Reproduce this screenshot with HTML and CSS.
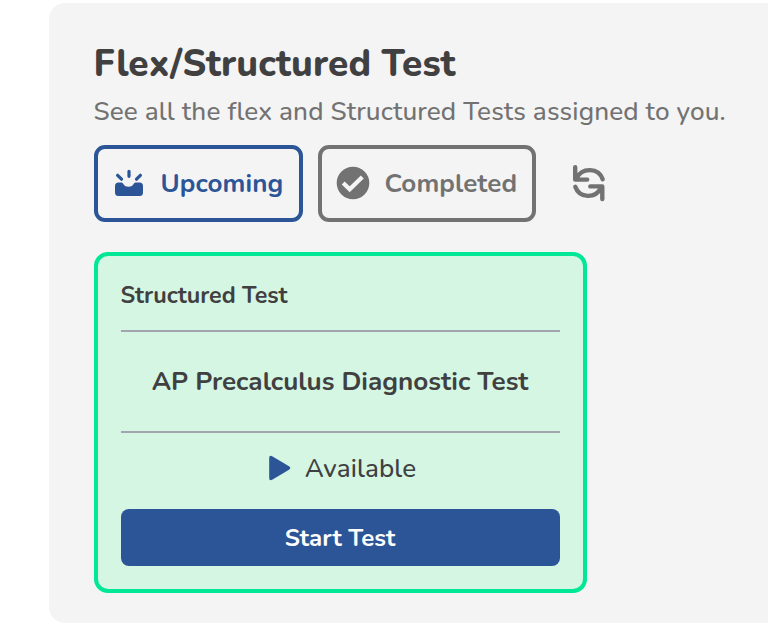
FILE: index.html
```html
<!DOCTYPE html>
<html lang="en">
<head>
<meta charset="utf-8">
<title>Flex/Structured Test</title>
<link rel="stylesheet" href="styles.css">
</head>
<body>
<main class="panel">
  <h1 class="title"><span>Flex/Structured Test</span></h1>
  <p class="subtitle"><span>See all the flex and Structured Tests assigned to you.</span></p>
  <div class="tabs">
    <button class="tab tab-active">
      <svg class="icon-inbox" width="30" height="28" viewBox="0 0 30 28" fill="currentColor">
        <path d="M3.500 13.500H7.500C9.500 13.500 9.500 17.800 14.500 17.800S19.500 13.500 21.500 13.500H25.500Q29 13.500 29 17V23.500Q29 27 25.500 27H4.500Q1 27 1 23.500V17Q1 13.500 4.500 13.500Z"/>
        <path d="M15 2.300V7.300M3.600 6.300L7.500 10.200M26.400 6.300L22.500 10.200" fill="none" stroke="currentColor" stroke-width="3.200" stroke-linecap="round"/>
      </svg>
      <span class="upcoming">Upcoming</span>
    </button>
    <button class="tab">
      <svg class="icon-check" width="34" height="34" viewBox="0 0 34 34">
        <circle cx="17" cy="17" r="16.300" fill="currentColor"/>
        <path d="M7.200 17L13.700 23.300L26.300 11" fill="none" stroke="#f4f4f4" stroke-width="4.200"/>
      </svg>
      <span class="completed">Completed</span>
    </button>
    <button class="refresh" aria-label="Refresh">
      <svg width="34" height="38" viewBox="0 0 34 38" fill="none" stroke="currentColor" stroke-width="4.400" stroke-linecap="round" stroke-linejoin="round">
        <path d="M3.200 3.200V15.600H15.200M4.300 14.500C10 3 26.500 3.500 30.700 15.300"/>
        <path d="M30.300 35V22.400H18.300M29.200 23.500C23.500 35 7.500 34.500 3.300 22.700"/>
      </svg>
    </button>
  </div>
  <section class="card">
    <h2 class="kind"><span>Structured Test</span></h2>
    <h3 class="name"><span>AP Precalculus Diagnostic Test</span></h3>
    <div class="status">
      <svg width="24" height="26" viewBox="0 0 24 26" fill="currentColor"><path d="M1.200 3Q1.200-.2 4.200 1.200L21 11.300Q23.500 13 21 14.700L4.200 24.800Q1.200 26.200 1.200 23Z"/></svg>
      <span class="available">Available</span>
    </div>
    <button class="start"><span>Start Test</span></button>
  </section>
</main>
</body>
</html>
```
FILE: styles.css
```css
* { box-sizing: border-box; }
body { margin: 0; height: 623px; overflow: hidden; background: #fff; font-family: Nunito, Lato, "Open Sans", sans-serif; color: #404041; }
button { font: inherit; margin: 0; padding: 0; border: 0; background: none; }
h1, h2, h3, p { margin: 0; white-space: nowrap; }
svg { display: block; flex: none; }
.panel { margin: 3px 0 0 49px; height: 620px; padding: 37px 0 0 44.500px; background: #f4f4f4; border-radius: 16px 0 0 16px; }
.title { font-size: 37px; line-height: 48px; font-weight: 800; letter-spacing: 0.080px; }
.subtitle { font-size: 26.100px; line-height: 36px; margin-top: 6px; color: #727272; font-weight: 500; letter-spacing: 0.120px; }
.tabs { display: flex; align-items: center; margin-top: 15px; height: 77px; }
.tab { display: flex; align-items: center; height: 77px; width: 218.500px; border: 4px solid #727272; border-radius: 11px; color: #727272; font-size: 26px; font-weight: 700; padding-left: 14.500px; }
.tab-active { width: 209px; margin-right: 15px; border-color: #2b5597; color: #2b5597; padding-left: 16px; }
.tab span { letter-spacing: 0.080px; }
.icon-inbox { margin-right: 17px; margin-top: -1px; }
.icon-check { margin: -1px 14.500px 0 0; }
.refresh { margin: -2px 0 0 36px; color: #727272; }
.card { margin-top: 30px; width: 493px; height: 341px; border: 4px solid #00e796; border-radius: 14px; background: #d5f6e3; padding: 23px 23px 0; }
.kind { font-size: 23.300px; line-height: 32px; height: 53px; border-bottom: 2px solid #a2a5b0; font-weight: 700; }
.name { font-size: 26.100px; line-height: 99px; height: 101px; border-bottom: 2px solid #a2a5b0; text-align: center; font-weight: 700; }
.status { display: flex; align-items: center; justify-content: center; gap: 13px; height: 71px; margin-bottom: 5px; padding: 0 0 1px 4px; font-size: 26px; font-weight: 500; }
.status svg { color: #2b5597; }
.available { letter-spacing: 0.150px; }
.start { width: 100%; height: 57px; border-radius: 8px; background: #2b5597; color: #fff; font-size: 24.100px; font-weight: 700; padding-top: 1px; }
```
